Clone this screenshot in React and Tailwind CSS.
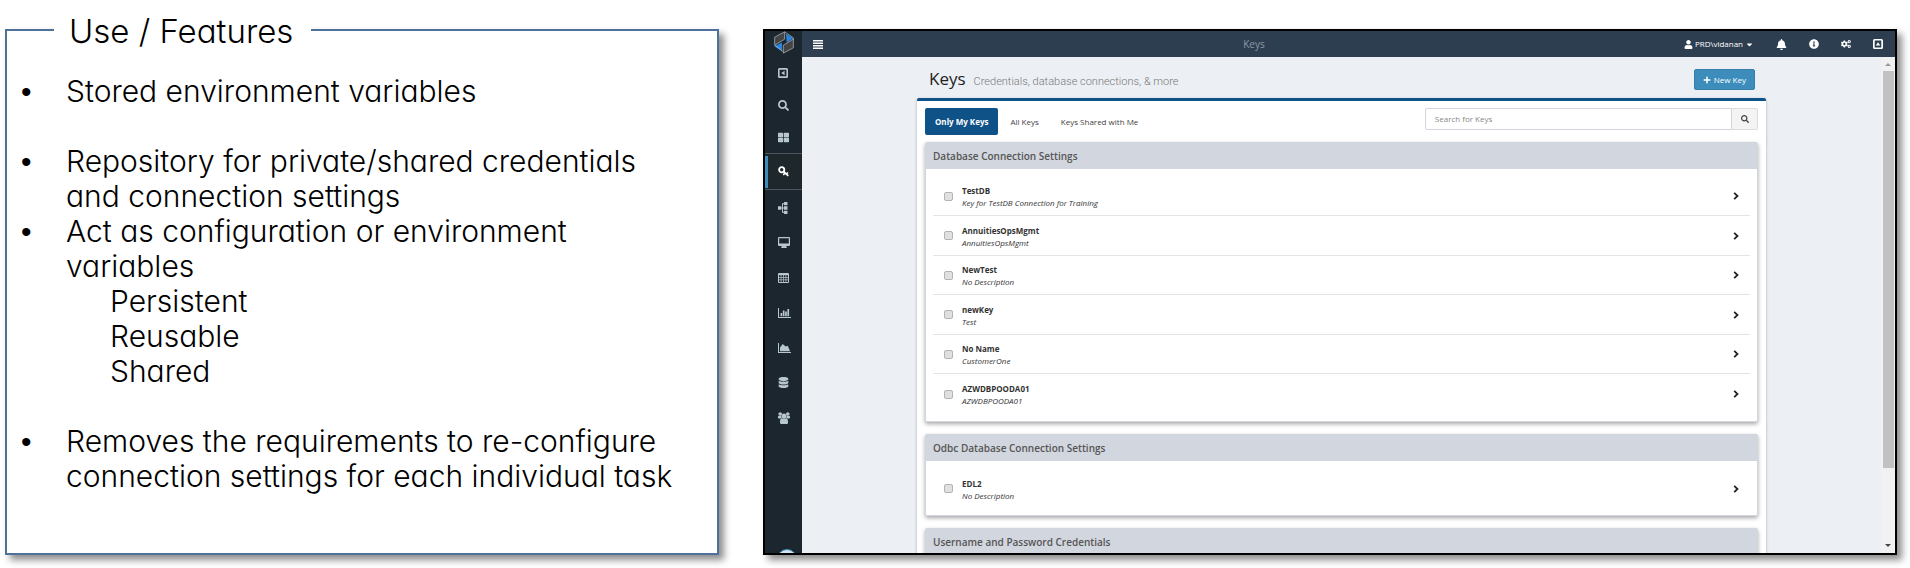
import React from "react";
import {
  FaSearch, FaThLarge, FaDatabase, FaUser, FaBell, FaInfoCircle,
  FaCogs, FaPlus, FaCaretDown,
} from "react-icons/fa";

const feature = "font-['Inter',sans-serif] font-light [font-feature-settings:'cv11']";

function Logo() {
  return (
    <svg viewBox="0 0 60 68" className="h-[23px] w-5" aria-hidden="true">
      <path d="M36 8 L58 21 L38 34 Z" fill="#2a86dd" />
      <path d="M24 34 V60 L1 45 Z" fill="#2a86dd" />
      <g stroke="#b9c2c9" strokeWidth="2" strokeLinejoin="round" fill="none">
        <path d="M32 2 L58 20 V26 M2 42 L28 62" />
        <path d="M2 18 L32 2 V24 L2 42 Z" fill="#444" />
        <path d="M28 42 L58 24 V50 L28 66 Z" fill="#444" />
      </g>
    </svg>
  );
}

const CaretSquare = ({ up }) => (
  <svg viewBox="0 0 10 10" className={up ? "h-[10px] w-[10px]" : "h-[10px] w-[10px] -rotate-90"} fill="currentColor" fillRule="evenodd" aria-hidden="true">
    <path d="M1.500 0h7A1.500 1.500 0 0 1 10 1.500v7A1.500 1.500 0 0 1 8.500 10h-7A1.500 1.500 0 0 1 0 8.500v-7A1.500 1.500 0 0 1 1.500 0zm.2 1.600v6.800h6.600V1.600zM2.700 6.600h4.600L5 3.200z" />
  </svg>
);
const Lines = () => (
  <svg viewBox="0 0 10 9" className="h-[9px] w-[10px]" fill="currentColor" aria-hidden="true">
    <path d="M0 0h10v1.400H0zM0 2.500h10v1.400H0zM0 5h10v1.400H0zM0 7.500h10v1.400H0z" />
  </svg>
);
const KeyIcon = () => (
  <svg viewBox="0 0 11 11" className="h-[11px] w-[11px]" fill="none" stroke="currentColor" aria-hidden="true">
    <circle cx="3.700" cy="3.700" r="2.600" strokeWidth="1.800" />
    <path d="M5.500 5.500l4.800 4.300M8 8.500l1.900-2M6.500 7.500l-1.200 1.500" strokeWidth="1.700" />
  </svg>
);
const Sitemap = () => (
  <svg viewBox="0 0 10 12" className="h-3 w-[10px]" fill="currentColor" aria-hidden="true">
    <path d="M0 4.300h3.200v3.400H0zM6 0h3.500v3.300H6zM6 4.300h3.500v3.400H6zM6 8.700h3.500V12H6zM3 5.500h3v1H3zM4 1.200h2v1h-1v7.600h1v1H4z" />
  </svg>
);
const Desktop = () => (
  <svg viewBox="0 0 12 11" className="h-[11px] w-3" fill="currentColor" fillRule="evenodd" aria-hidden="true">
    <path d="M1 0h10a1 1 0 0 1 1 1v7a1 1 0 0 1-1 1H8l.8 1.200V11H3.200v-.8L4 9H1a1 1 0 0 1-1-1V1a1 1 0 0 1 1-1zm.2 1.200v5.300h9.600V1.200z" />
  </svg>
);
const TableIcon = () => (
  <svg viewBox="0 0 11 10" className="h-[10px] w-[11px]" fill="currentColor" fillRule="evenodd" aria-hidden="true">
    <path d="M1 0h9a1 1 0 0 1 1 1v8a1 1 0 0 1-1 1H1a1 1 0 0 1-1-1V1a1 1 0 0 1 1-1zM1 2.200v1.700h1.700V2.200zm2.400 0v1.700h1.800V2.200zm2.500 0v1.700h1.700V2.200zm2.400 0v1.700H10V2.200zM1 4.700v1.700h1.700V4.700zm2.400 0v1.700h1.800V4.700zm2.500 0v1.700h1.700V4.700zm2.400 0v1.700H10V4.700zM1 7.200v1.700h1.700V7.200zm2.400 0v1.700h1.800V7.200zm2.500 0v1.700h1.700V7.200zm2.400 0v1.700H10V7.200z" />
  </svg>
);
const BarChart = () => (
  <svg viewBox="0 0 13 10" className="h-[10px] w-[13px]" fill="currentColor" aria-hidden="true">
    <path d="M0 0h1v9h12v1H0zM2.500 5h1.700v3.200H2.500zM4.800 2.500h1.700v5.700H4.800zM7.100 3.500h1.700v4.700H7.100zM9.400 1h1.700v7.200H9.400z" />
  </svg>
);
const AreaChart = () => (
  <svg viewBox="0 0 13 10" className="h-[10px] w-[13px]" fill="currentColor" aria-hidden="true">
    <path d="M0 0h1v9h12v1H0zM2 8.200V4.500L4.700 1l3 2.500L9.800 2.800 12 8.200z" />
  </svg>
);
const Group = () => (
  <svg viewBox="0 0 12 12" className="h-3 w-3" fill="currentColor" aria-hidden="true">
    <circle cx="2.200" cy="2" r="1.800" /><circle cx="9.800" cy="2" r="1.800" /><circle cx="6" cy="4" r="2.500" />
    <path d="M0 4.800Q0 3.800 1 3.800h2.300Q3 5.500 4 6.500H.8Q0 6.500 0 5.800zM12 4.800Q12 3.800 11 3.800H8.700Q9 5.500 8 6.500h3.200Q12 6.500 12 5.800zM2 9.500Q2 6.500 4.200 6.500h3.600Q10 6.500 10 9.500v1.200Q10 12 8.800 12H3.200Q2 12 2 10.700z" />
  </svg>
);
const Chevron = () => (
  <svg viewBox="0 0 6 8" className="h-2 w-[6px]" fill="none" stroke="currentColor" strokeWidth="1.800" aria-hidden="true">
    <path d="M1.200 .8L4.500 4 1.200 7.200" />
  </svg>
);

const nav = [
  { label: "Collapse", icon: <CaretSquare />, h: "h-8" },
  { label: "Search", icon: <FaSearch size={11} />, h: "h-8" },
  { label: "Dashboard", icon: <FaThLarge size={11} />, h: "h-8" },
  { label: "Keys", icon: <KeyIcon />, h: "h-[37px]", active: true },
  { label: "Workflows", icon: <Sitemap />, h: "h-[35px]" },
  { label: "Machines", icon: <Desktop />, h: "h-[35px]" },
  { label: "Tables", icon: <TableIcon />, h: "h-[35px]" },
  { label: "Bar charts", icon: <BarChart />, h: "h-[35px]" },
  { label: "Area charts", icon: <AreaChart />, h: "h-[35px]" },
  { label: "Databases", icon: <FaDatabase size={11} />, h: "h-[35px]" },
  { label: "Users", icon: <Group />, h: "h-[35px]" },
];

function Sidebar() {
  return (
    <nav className="flex w-[37px] shrink-0 flex-col overflow-hidden bg-[#1b262e] text-[#b8c7ce]">
      <div className="flex h-[26px] shrink-0 justify-center"><Logo /></div>
      {nav.map((n) => (
        <a
          key={n.label}
          href="#"
          aria-label={n.label}
          className={`flex shrink-0 items-center ${n.h} ${n.active
            ? "border-y border-[#4b555c] bg-[#1e282c] text-white"
            : "pl-[13px]"}`}
        >
          {n.active && <span className="mr-[10px] h-8 w-[3px] bg-[#3c8dbc]" />}
          {n.icon}
        </a>
      ))}
      <div className="mt-auto h-1 overflow-hidden pl-3">
        <div className="h-5 w-5 rounded-full border border-[#3c8dbc] bg-[#d5e3ee]" />
      </div>
    </nav>
  );
}

function TopBar() {
  return (
    <header className="grid h-[26px] shrink-0 grid-cols-[441fr_auto_630fr] items-center bg-[#2c3e50] text-white">
      <button aria-label="Toggle menu" className="ml-[11px] w-fit"><Lines /></button>
      <span className="text-[10px] leading-4 text-[#8f9aa4]">Keys</span>
      <div className="flex items-center justify-end pr-3">
        <button className="mr-[22px] flex items-center gap-[2px] text-[8px] font-medium leading-3">
          <FaUser size={9} />PRD\vidanan<FaCaretDown size={9} />
        </button>
        <div className="flex items-center gap-[22px]">
          <button aria-label="Notifications"><FaBell size={11} /></button>
          <button aria-label="Information"><FaInfoCircle size={10} /></button>
          <button aria-label="Settings"><FaCogs size={10} /></button>
          <button aria-label="Collapse bar"><CaretSquare up /></button>
        </div>
      </div>
    </header>
  );
}

function KeyRow({ name, desc }) {
  return (
    <li className="flex items-center border-b border-[#e4e4e4] pl-[11px] pr-[11px] odd:h-[39px] even:h-10 last:border-b-0">
      <label className="flex flex-1 items-center gap-[9px]">
        <input
          type="checkbox"
          className="h-[9px] w-[9px] appearance-none rounded-xs border border-[#b4b4b4] bg-[#e0e0e0]"
        />
        <span className="flex flex-col pt-[2px] text-[8px] leading-3 text-[#333]">
          <b className="font-bold">{name}</b>
          <i>{desc}</i>
        </span>
      </label>
      <button aria-label={`Open ${name}`} className="text-[#222]"><Chevron /></button>
    </li>
  );
}

function Panel({ title, rows }) {
  return (
    <section className="shrink-0 rounded-xs border border-[#d2d6de] bg-white shadow-[0_2px_4px_rgba(0,0,0,0.35)]">
      <h2 className="bg-[#d2d6de] px-[7px] py-[5px] text-[10px] font-semibold leading-4 text-[#555]">{title}</h2>
      <ul className="px-[7px] pb-[7px] pt-2">
        {rows.map((r) => <KeyRow key={r[0]} name={r[0]} desc={r[1]} />)}
      </ul>
    </section>
  );
}

function KeysPage() {
  return (
    <main className="mx-auto w-full max-w-[849px]">
      <div className="flex h-[41px] items-center justify-between pl-3 pr-[11px] pt-1">
        <h1 className="flex items-baseline gap-2 pt-px text-[17px] font-medium leading-6 text-[#222]">
          Keys
          <small className="font-['Roboto',sans-serif] text-[11px] font-light text-[#777]">Credentials, database connections, &amp; more</small>
        </h1>
        <button className="flex h-[21px] items-center gap-[3px] rounded-xs border border-[#367fa9] bg-[#3c8dbc] px-2 text-[8px] font-medium text-white">
          <FaPlus size={8} />New Key
        </button>
      </div>
      <div className="rounded-t-xs border-t-[3px] border-[#0f5288] bg-white px-2 pt-[7px] shadow-[0_1px_3px_rgba(0,0,0,0.3)]">
        <div className="flex items-start justify-between pb-[7px]">
          <div className="flex gap-[2px] text-[8px] text-[#444]">
            <button className="h-[27px] rounded-xs bg-[#0f5288] px-[10px] font-bold text-white">Only My Keys</button>
            <button className="h-[27px] px-[10px]">All Keys</button>
            <button className="h-[27px] px-[10px]">Keys Shared with Me</button>
          </div>
          <form className="flex h-[22px] w-2/5 text-[8px]">
            <input
              type="text"
              aria-label="Search for Keys"
              placeholder="Search for Keys"
              className="min-w-0 flex-1 rounded-l-xs border border-[#d2d6de] bg-white px-[9px] placeholder:text-[#888]"
            />
            <button type="button" aria-label="Search" className="flex w-[26px] items-center justify-center rounded-r-xs border border-l-0 border-[#ddd] bg-[#f4f4f4] text-[#444]">
              <FaSearch size={8} />
            </button>
          </form>
        </div>
        <div className="flex flex-col gap-3">
          <Panel
            title="Database Connection Settings"
            rows={[
              ["TestDB", "Key for TestDB Connection for Training"],
              ["AnnuitiesOpsMgmt", "AnnuitiesOpsMgmt"],
              ["NewTest", "No Description"],
              ["newKey", "Test"],
              ["No Name", "CustomerOne"],
              ["AZWDBPOODA01", "AZWDBPOODA01"],
            ]}
          />
          <Panel title="Odbc Database Connection Settings" rows={[["EDL2", "No Description"]]} />
          <Panel title="Username and Password Credentials" rows={[]} />
        </div>
      </div>
    </main>
  );
}

function ScrollBar() {
  return (
    <div className="flex w-[14px] shrink-0 flex-col items-center bg-[#f1f1f1]" aria-hidden="true">
      <svg viewBox="0 0 14 14" className="h-[14px] w-[14px]"><path d="M4 9h6L7 6z" fill="#999" /></svg>
      <div className="w-[11px] flex-[397] bg-[#c1c1c1]" />
      <div className="flex-[71]" />
      <svg viewBox="0 0 14 14" className="h-[14px] w-[14px]"><path d="M4 5h6L7 8z" fill="#444" /></svg>
    </div>
  );
}

function Bullet({ children, className = "" }) {
  return (
    <li className={`flex ${className}`}>
      <span className="w-[45px] shrink-0 font-['Liberation_Sans',sans-serif]">•</span>
      <div className="whitespace-nowrap">{children}</div>
    </li>
  );
}

function Features() {
  return (
    <section className="relative border-2 border-[#4d7198] bg-white shadow-[5px_5px_7px_rgba(0,0,0,0.45)]">
      <h1 className={`absolute -top-5 left-[47px] bg-white pl-[15px] pr-[18px] text-[33px] leading-10 text-black ${feature}`}>
        Use / Features
      </h1>
      <ul className={`list-none pl-[14px] pt-[43px] text-[30px] leading-[35px] text-black ${feature}`}>
        <Bullet>Stored environment variables</Bullet>
        <Bullet className="mt-[35px]">
          Repository for private/shared credentials<br />and connection settings
        </Bullet>
        <Bullet>
          Act as configuration or environment<br />variables
          <ul className="pl-11">
            <li>Persistent</li>
            <li>Reusable</li>
            <li>Shared</li>
          </ul>
        </Bullet>
        <Bullet className="mt-[35px]">
          Removes the requirements to re-configure<br />connection settings for each individual task
        </Bullet>
      </ul>
    </section>
  );
}

export default function App() {
  return (
    <div className="grid h-screen grid-cols-[714fr_1134fr] gap-11 bg-white pb-[13px] pl-[5px] pr-[13px] pt-[29px] font-['Open_Sans',sans-serif]">
      <Features />
      <div className="flex min-h-0 overflow-hidden border-2 border-black bg-[#ecf0f5] shadow-[5px_5px_7px_rgba(0,0,0,0.45)]">
        <Sidebar />
        <div className="flex min-w-0 flex-1 flex-col">
          <TopBar />
          <div className="flex min-h-0 flex-1">
            <div className="min-w-0 flex-1 overflow-hidden"><KeysPage /></div>
            <ScrollBar />
          </div>
        </div>
      </div>
    </div>
  );
}
